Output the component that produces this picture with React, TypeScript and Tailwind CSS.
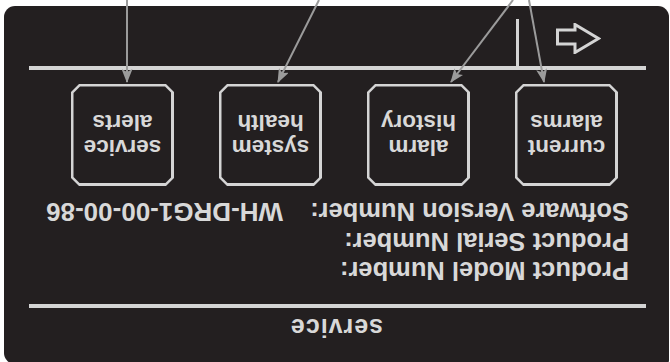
import React from 'react';

const boxes = [
  ['current', 'alarms'],
  ['alarm', 'history'],
  ['system', 'health'],
  ['service', 'alerts'],
];

const rows: [string, string][] = [
  ['Product Model Number:', ''],
  ['Product Serial Number:', ''],
  ['Software Version Number:', 'WH-DRG1-00-00-86'],
];

// callouts drawn in screen coordinates, over the flipped panel
const callouts = [
  [127, 0, 127, 82],
  [319, 0, 278, 82],
  [513, 0, 451, 82],
  [529, 0, 544, 82],
];

function MenuBox({ lines }: { lines: string[] }) {
  return (
    <div className="w-[103px] h-[102px] bg-[#d4d4d4] p-[2.5px] [clip-path:polygon(8px_0,calc(100%-8px)_0,100%_8px,100%_calc(100%-8px),calc(100%-8px)_100%,8px_100%,0_calc(100%-8px),0_8px)]">
      <div className="w-full h-full bg-[#231f20] flex flex-col items-center justify-center text-[22.5px] leading-[25px] font-bold text-[#d8d8d8] [clip-path:polygon(6.5px_0,calc(100%-6.5px)_0,100%_6.5px,100%_calc(100%-6.5px),calc(100%-6.5px)_100%,6.5px_100%,0_calc(100%-6.5px),0_6.5px)]">
        {lines.map((l) => (
          <span key={l}>{l}</span>
        ))}
      </div>
    </div>
  );
}

export default function App() {
  return (
    <div className="relative w-[670px] h-[362px] overflow-hidden bg-white font-['Liberation_Sans',Arial,sans-serif]">
      <div className="w-full h-full rotate-180">
        <div className="ml-[1px] mt-[2px] w-[665px] h-[358px] rounded-[11px] rounded-tl-[4px] bg-[#231f20] flex flex-col text-[#d8d8d8]">
          <div className="mt-[22px] h-[29px] leading-[29px] text-center text-[25px] font-bold tracking-[1px]">
            service
          </div>
          <div className="mt-[5px] ml-[23px] w-[617px] h-[4px] bg-[#d4d4d4]" />

          <div className="mt-[18.5px] pl-[40px] flex flex-col text-[25.5px] leading-[29.5px] font-bold">
            {rows.map(([label, value]) => (
              <div key={label} className="flex">
                <span className="w-[346px]">{label}</span>
                <span className="text-[26px]">{value}</span>
              </div>
            ))}
          </div>

          <div className="mt-[11px] pl-[51px] flex gap-[45px]">
            {boxes.map((b) => (
              <MenuBox key={b[0]} lines={b} />
            ))}
          </div>

          <div className="mt-[14px] ml-[23px] w-[617px] h-[4px] bg-[#d4d4d4]" />

          <div className="flex items-start">
            <svg className="ml-[68px] mt-[12px]" width="45" height="31" viewBox="0 0 45 31">
              <polygon
                points="43.5,24 26,24 26,29.5 2.5,15.5 26,1.5 26,10 43.5,10"
                fill="none"
                stroke="#d4d4d4"
                strokeWidth="3"
              />
            </svg>
            <div className="ml-[37px] w-[3px] h-[47px] bg-[#d4d4d4]" />
          </div>
        </div>
      </div>

      <svg className="absolute inset-0 pointer-events-none" width="670" height="362">
        <defs>
          <marker
            id="head"
            markerUnits="userSpaceOnUse"
            markerWidth="14"
            markerHeight="11"
            refX="13"
            refY="5.5"
            orient="auto"
          >
            <path d="M0,0 L14,5.5 L0,11 L3,5.5 Z" fill="#9b9b9b" />
          </marker>
        </defs>
        {callouts.map(([x1, y1, x2, y2], i) => (
          <line
            key={i}
            x1={x1}
            y1={y1}
            x2={x2}
            y2={y2}
            stroke="#9b9b9b"
            strokeWidth="2"
            markerEnd="url(#head)"
          />
        ))}
      </svg>
    </div>
  );
}
